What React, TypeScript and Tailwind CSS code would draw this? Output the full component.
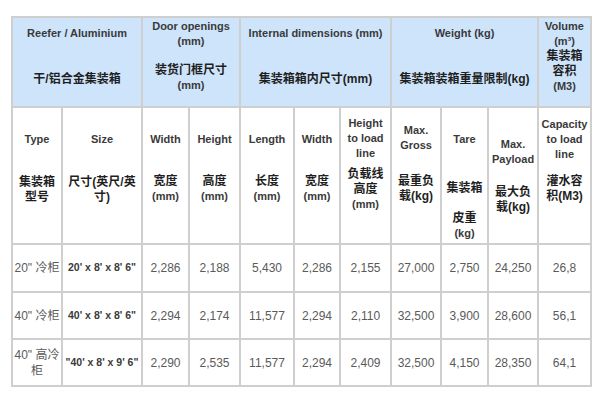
import React from "react";

type Line = { t: string; cls?: string; zh?: boolean };
type HeadCell = { lines: Line[]; span?: number; pt: string };

const font = { fontFamily: '"Liberation Sans", "Noto Sans CJK SC", sans-serif' };

// header row 1 (blue)
const groupHead: HeadCell[] = [
  { span: 2, pt: "pt-[8px]", lines: [{ t: "Reefer / Aluminium" }, { t: "干/铝合金集装箱", zh: true, cls: "mt-[31px]" }] },
  {
    span: 2,
    pt: "pt-[1px]",
    lines: [{ t: "Door openings" }, { t: "(mm)" }, { t: "装货门框尺寸", zh: true, cls: "mt-[14px]" }, { t: "(mm)" }],
  },
  { span: 3, pt: "pt-[8px]", lines: [{ t: "Internal dimensions (mm)" }, { t: "集装箱箱内尺寸(mm)", zh: true, cls: "mt-[31px]" }] },
  { span: 3, pt: "pt-[8px]", lines: [{ t: "Weight (kg)" }, { t: "集装箱装箱重量限制(kg)", zh: true, cls: "mt-[31px]" }] },
  {
    pt: "pt-[1px]",
    lines: [{ t: "Volume" }, { t: "(m³)" }, { t: "集装箱", zh: true }, { t: "容积", zh: true }, { t: "(M3)" }],
  },
];

// header row 2 (white)
const subHead: HeadCell[] = [
  { pt: "pt-[24px]", lines: [{ t: "Type" }, { t: "集装箱", zh: true, cls: "mt-[28px]" }, { t: "型号", zh: true }] },
  { pt: "pt-[24px]", lines: [{ t: "Size" }, { t: "尺寸(英尺/英", zh: true, cls: "mt-[28px]" }, { t: "寸)", zh: true }] },
  { pt: "pt-[24px]", lines: [{ t: "Width" }, { t: "宽度", zh: true, cls: "mt-[27px]" }, { t: "(mm)" }] },
  { pt: "pt-[24px]", lines: [{ t: "Height" }, { t: "高度", zh: true, cls: "mt-[27px]" }, { t: "(mm)" }] },
  { pt: "pt-[24px]", lines: [{ t: "Length" }, { t: "长度", zh: true, cls: "mt-[27px]" }, { t: "(mm)" }] },
  { pt: "pt-[24px]", lines: [{ t: "Width" }, { t: "宽度", zh: true, cls: "mt-[27px]" }, { t: "(mm)" }] },
  {
    pt: "pt-[8px]",
    lines: [
      { t: "Height" },
      { t: "to load" },
      { t: "line" },
      { t: "负载线", zh: true, cls: "mt-[6px]" },
      { t: "高度", zh: true },
      { t: "(mm)" },
    ],
  },
  { pt: "pt-[15px]", lines: [{ t: "Max." }, { t: "Gross" }, { t: "最重负", zh: true, cls: "mt-[21px]" }, { t: "载(kg)", zh: true }] },
  {
    pt: "pt-[24px]",
    lines: [
      { t: "Tare" },
      { t: "集装箱", zh: true, cls: "mt-[34px]" },
      { t: "皮重", zh: true, cls: "mt-[15px]" },
      { t: "(kg)" },
    ],
  },
  { pt: "pt-[29px]", lines: [{ t: "Max." }, { t: "Payload" }, { t: "最大负", zh: true, cls: "mt-[18px]" }, { t: "载(kg)", zh: true }] },
  {
    pt: "pt-[9px]",
    lines: [{ t: "Capacity" }, { t: "to load" }, { t: "line" }, { t: "灌水容", zh: true, cls: "mt-[12px]" }, { t: "积(M3)", zh: true }],
  },
];

const rows = [
  { h: "h-[48px]", type: "20\" 冷柜", size: "20' x 8' x 8' 6\"", vals: ["2,286", "2,188", "5,430", "2,286", "2,155", "27,000", "2,750", "24,250", "26,8"] },
  { h: "h-[47px]", type: "40\" 冷柜", size: "40' x 8' x 8' 6\"", vals: ["2,294", "2,174", "11,577", "2,294", "2,110", "32,500", "3,900", "28,600", "56,1"] },
  { h: "h-[47px]", type: "40\" 高冷柜", size: "\"40' x 8' x 9' 6\"", vals: ["2,290", "2,535", "11,577", "2,294", "2,409", "32,500", "4,150", "28,350", "64,1"] },
];

const widths = ["w-[50px]", "w-[80px]", "w-[47px]", "w-[51px]", "w-[54px]", "w-[46px]", "w-[51px]", "w-[50px]", "w-[47px]", "w-[50px]", "w-[53px]"];

function HeadLines({ lines }: { lines: Line[] }) {
  return (
    <>
      {lines.map((l, i) => (
        <div
          key={i}
          className={`leading-[15px] ${l.zh ? "text-[12px] text-[#1f1f1f]" : "text-[11px] text-[#3a3a3a]"} ${l.cls ?? ""}`}
        >
          {l.t}
        </div>
      ))}
    </>
  );
}

export default function App() {
  return (
    <div className="w-[600px] h-[400px] bg-white pl-[11px] pt-[16px]" style={font}>
      <table className="table-fixed border-collapse w-[579px] border-2 border-[#cfcfcf]">
        <colgroup>
          {widths.map((w, i) => (
            <col key={i} className={w} />
          ))}
        </colgroup>
        <thead>
          <tr className="h-[90px] bg-[#cde4fa]">
            {groupHead.map((c, i) => (
              <th key={i} colSpan={c.span ?? 1} className={`border-2 border-[#cfcfcf] align-top px-0 font-bold text-center ${c.pt}`}>
                <HeadLines lines={c.lines} />
              </th>
            ))}
          </tr>
          <tr className="h-[137px] bg-white">
            {subHead.map((c, i) => (
              <th key={i} className={`border-2 border-[#cfcfcf] align-top px-0 font-bold text-center ${c.pt}`}>
                <HeadLines lines={c.lines} />
              </th>
            ))}
          </tr>
        </thead>
        <tbody>
          {rows.map((r, i) => (
            <tr key={i} className={r.h}>
              <td className="border-2 border-[#cfcfcf] px-0 text-center align-middle text-[12px] leading-[16px] text-[#5a5a5a]">
                {r.type}
              </td>
              <td className="border-2 border-[#cfcfcf] px-0 text-center align-middle text-[10.5px] font-bold text-[#3a3a3a]">
                {r.size}
              </td>
              {r.vals.map((v, j) => (
                <td key={j} className="border-2 border-[#cfcfcf] px-0 text-center align-middle text-[12px] text-[#5a5a5a]">
                  {v}
                </td>
              ))}
            </tr>
          ))}
        </tbody>
      </table>
    </div>
  );
}
